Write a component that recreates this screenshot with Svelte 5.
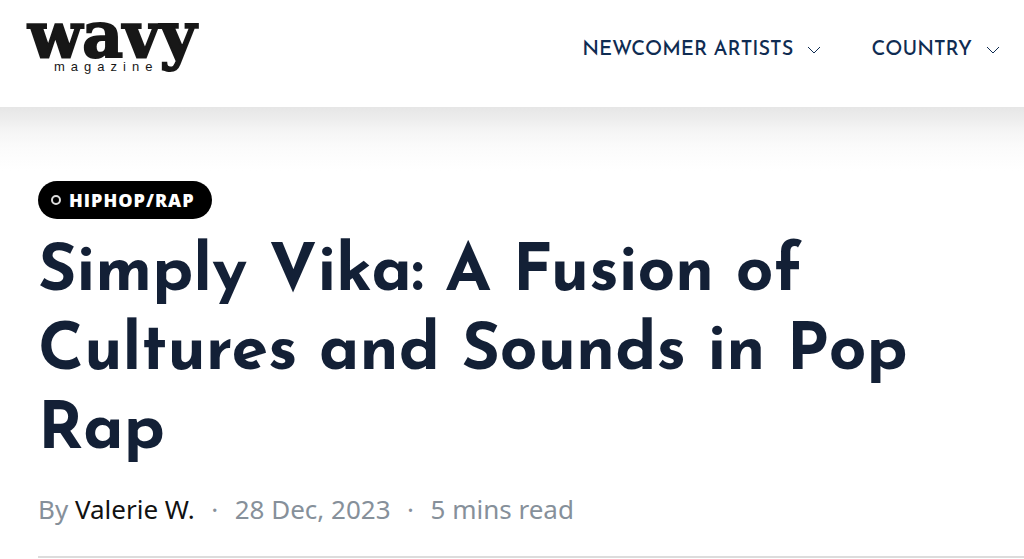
<script lang="ts">
	const menu = ['Newcomer Artists', 'Country'];

	const article = {
		category: 'HipHop/Rap',
		title: 'Simply Vika: A Fusion of Cultures and Sounds in Pop Rap',
		author: 'Valerie W.',
		date: '28 Dec, 2023',
		dateTime: '2023-12-28',
		readTime: '5 mins read'
	};
</script>

<header class="site-header">
	<a class="logo" href="/" aria-label="Wavy magazine">
		<span class="logo-name">wavy</span>
		<span class="logo-sub">magazine</span>
	</a>
	<nav class="menu">
		{#each menu as item}
			<button type="button" class="menu-item" aria-haspopup="true">
				{item}
				<svg class="chevron" viewBox="0 0 14 8" aria-hidden="true">
					<path d="M1 1l6 6 6-6" />
				</svg>
			</button>
		{/each}
	</nav>
</header>

<main class="post">
	<a class="badge" href="/category/hiphop-rap">{article.category}</a>
	<h1 class="title">{article.title}</h1>
	<div class="meta">
		<span>By <a class="author" href="/author/valerie-w">{article.author}</a></span>
		<span class="dot">·</span>
		<time datetime={article.dateTime}>{article.date}</time>
		<span class="dot">·</span>
		<span>{article.readTime}</span>
	</div>
</main>

<style>
	:global(body) {
		background: #fff;
	}

	.site-header {
		display: flex;
		align-items: flex-start;
		justify-content: space-between;
		padding: 12px 24px 31px 28px;
	}

	.logo {
		display: flex;
		flex-direction: column;
		color: #171717;
		text-decoration: none;
	}

	.logo-name {
		font: bold 63px/46px 'DejaVu Serif', serif;
		-webkit-text-stroke: 2px #171717;
	}

	.logo-sub {
		padding-left: 26px;
		font: 13px/18px 'Liberation Sans', sans-serif;
		letter-spacing: 6px;
	}

	.menu {
		display: flex;
		gap: 50px;
		padding-top: 26px;
	}

	.menu-item {
		display: flex;
		align-items: center;
		gap: 14px;
		padding: 0;
		border: 0;
		background: none;
		color: #0f2c52;
		font: 500 20px/24px 'Josefin Sans', sans-serif;
		text-transform: uppercase;
		cursor: pointer;
	}

	.chevron {
		width: 14px;
		height: 8px;
		fill: none;
		stroke: currentColor;
		stroke-width: 1;
	}

	.post {
		padding: 74px 0 0 38px;
		background: linear-gradient(
			#e6e6e6 0,
			#ededed 12px,
			#f5f5f5 24px,
			#fbfbfb 40px,
			#fff 64px
		);
	}

	.badge {
		display: inline-flex;
		align-items: center;
		gap: 8px;
		padding: 0 17px 0 13px;
		border-radius: 19px;
		background: #000;
		color: #fff;
		font: 800 18px/38px 'Open Sans', sans-serif;
		letter-spacing: 1px;
		text-decoration: none;
		text-transform: uppercase;
		vertical-align: top;
	}

	.badge::before {
		content: '';
		box-sizing: border-box;
		width: 10px;
		height: 10px;
		border: 2px solid #ddd;
		border-radius: 50%;
	}

	.title {
		max-width: 900px;
		margin: 15px 0 0;
		color: #132036;
		font: bold 66px/79px 'Josefin Sans', sans-serif;
	}

	.meta {
		display: flex;
		padding: 20px 0 29px;
		border-bottom: 2px solid #dcdcdc;
		color: #86909a;
		font: 26px/36px 'Noto Sans', sans-serif;
	}

	.dot {
		width: 40px;
		text-align: center;
	}

	.author {
		color: #111;
		text-decoration: none;
	}
</style>
